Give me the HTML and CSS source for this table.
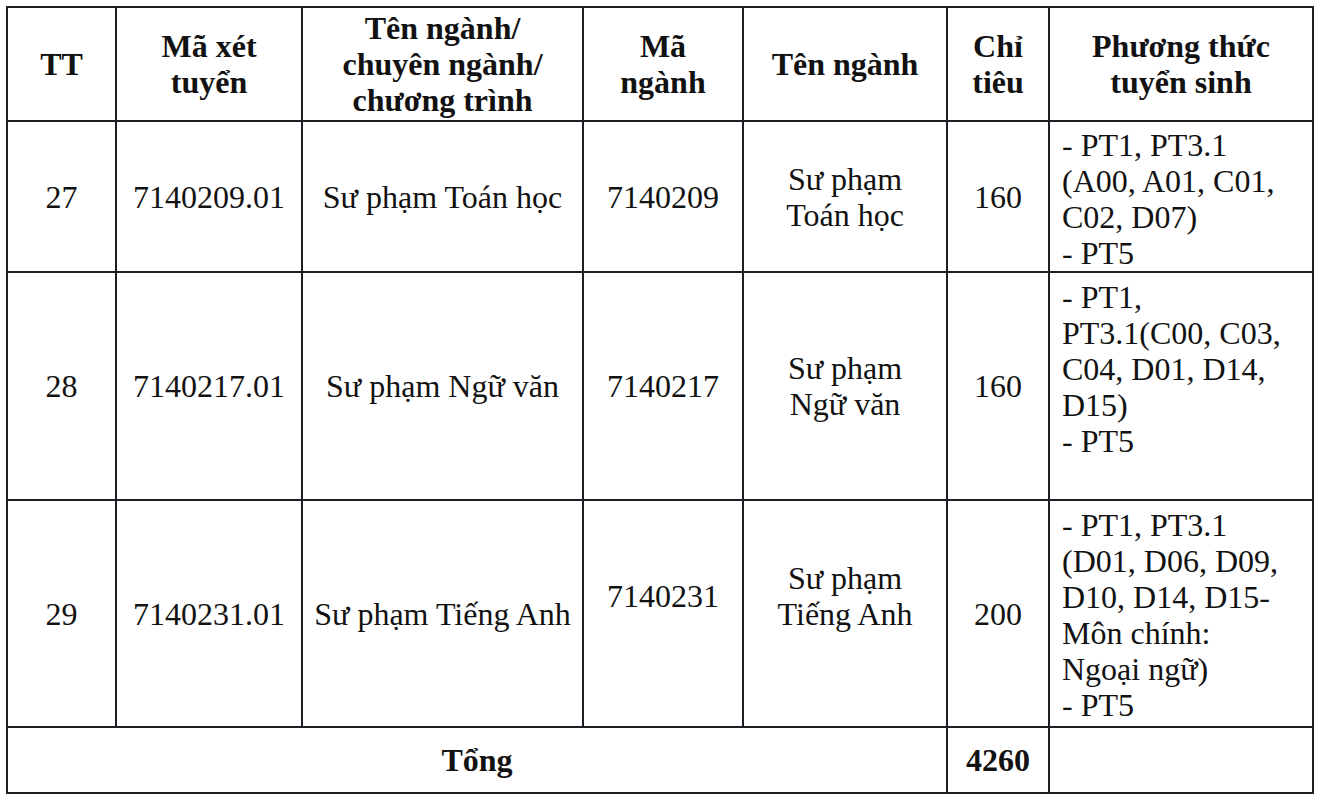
FILE: index.html
```html
<!DOCTYPE html>
<html lang="vi">
<head>
<meta charset="utf-8">
<title>Chỉ tiêu tuyển sinh</title>
<link rel="stylesheet" href="styles.css">
</head>
<body>
<table class="quota">
  <colgroup>
    <col class="c-tt">
    <col class="c-ma">
    <col class="c-ten">
    <col class="c-mang">
    <col class="c-tenn">
    <col class="c-ct">
    <col class="c-pt">
  </colgroup>
  <thead>
    <tr class="r-head">
      <th>TT</th>
      <th>Mã xét<br>tuyển</th>
      <th>Tên ngành/<br>chuyên ngành/<br>chương trình</th>
      <th>Mã<br>ngành</th>
      <th>Tên ngành</th>
      <th>Chỉ<br>tiêu</th>
      <th>Phương thức<br>tuyển sinh</th>
    </tr>
  </thead>
  <tbody>
    <tr class="r-27">
      <td>27</td>
      <td>7140209.01</td>
      <td>Sư phạm Toán học</td>
      <td>7140209</td>
      <td>Sư phạm<br>Toán học</td>
      <td>160</td>
      <td class="method">- PT1, PT3.1<br>(A00, A01, C01,<br>C02, D07)<br>- PT5</td>
    </tr>
    <tr class="r-28">
      <td>28</td>
      <td>7140217.01</td>
      <td>Sư phạm Ngữ văn</td>
      <td>7140217</td>
      <td>Sư phạm<br>Ngữ văn</td>
      <td>160</td>
      <td class="method">- PT1,<br>PT3.1(C00, C03,<br>C04, D01, D14,<br>D15)<br>- PT5</td>
    </tr>
    <tr class="r-29">
      <td>29</td>
      <td>7140231.01</td>
      <td>Sư phạm Tiếng Anh</td>
      <td class="raised">7140231</td>
      <td class="raised">Sư phạm<br>Tiếng Anh</td>
      <td>200</td>
      <td class="method">- PT1, PT3.1<br>(D01, D06, D09,<br>D10, D14, D15-<br>Môn chính:<br>Ngoại ngữ)<br>- PT5</td>
    </tr>
    <tr class="r-total">
      <td colspan="5" class="total-label">Tổng</td>
      <td class="total-value">4260</td>
      <td></td>
    </tr>
  </tbody>
</table>
</body>
</html>
```

FILE: styles.css
```css
html, body {
  background: #ffffff;
}

body {
  margin: 6px;
  font-family: "Liberation Serif", "Tinos", "Times New Roman", "DejaVu Serif", serif;
  color: #121212;
}

.quota {
  border-collapse: collapse;
  table-layout: fixed;
  width: 1306px;
  font-family: "Liberation Serif", "Tinos", "Times New Roman", "DejaVu Serif", serif;
  font-size: 32px;
  line-height: 36px;
}

.c-tt { width: 109px; }
.c-ma { width: 186px; }
.c-ten { width: 281px; }
.c-mang { width: 160px; }
.c-tenn { width: 204px; }
.c-ct { width: 102px; }
.c-pt { width: 264px; }

.quota th,
.quota td {
  border: 2px solid #1c1f24;
  padding: 0 4px;
  text-align: center;
  vertical-align: middle;
  font-weight: normal;
}

.quota th {
  font-weight: bold;
}

.r-head { height: 114px; }
.r-27 { height: 151px; }
.r-28 { height: 228px; }
.r-29 { height: 227px; }
.r-total { height: 66px; }

.quota td.method {
  text-align: left;
  vertical-align: top;
  padding: 5px 4px 0 12px;
}

.r-28 td.method,
.r-29 td.method {
  padding-top: 6px;
}

.quota td.raised {
  padding-bottom: 36px;
}

.quota td.total-label,
.quota td.total-value {
  font-weight: bold;
}
```
